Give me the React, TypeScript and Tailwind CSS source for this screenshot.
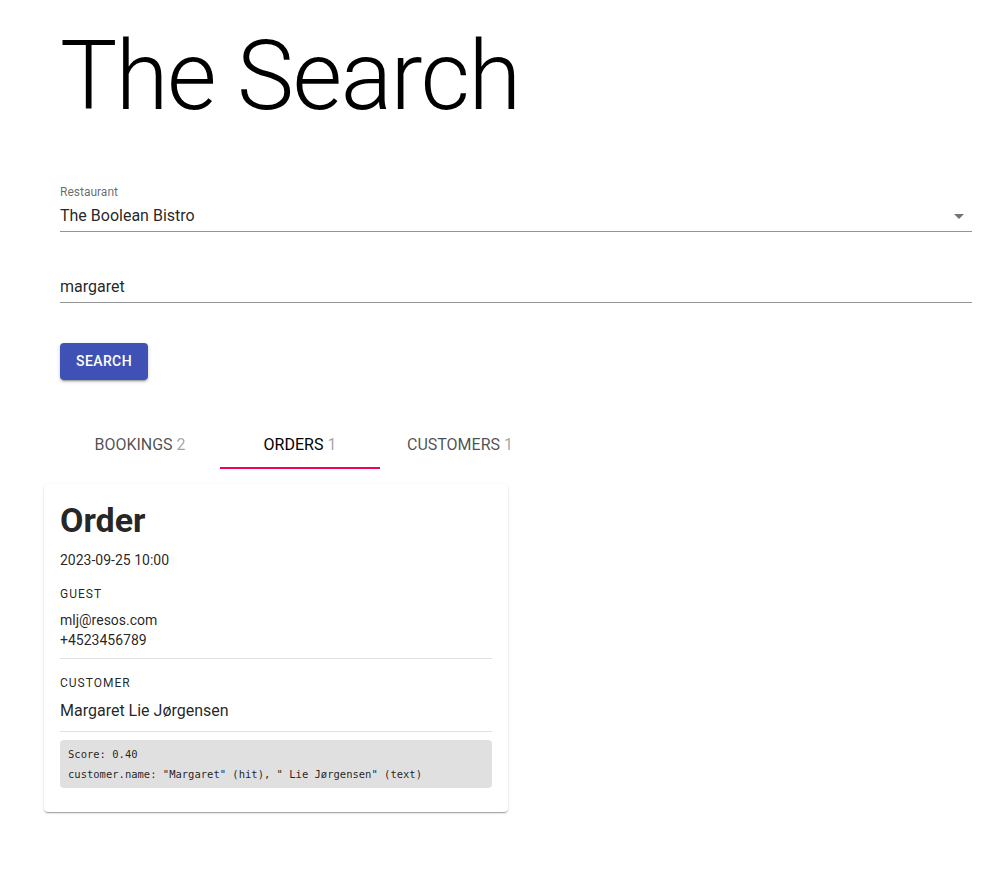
import React from 'react'

export default function App() {
  const tabs = [
    { label: 'BOOKINGS', count: 2, active: false },
    { label: 'ORDERS', count: 1, active: true },
    { label: 'CUSTOMERS', count: 1, active: false },
  ]

  return (
    <div className="min-h-screen bg-white text-[#000000de]" style={{ fontFamily: 'Roboto, "Noto Sans", sans-serif' }}>
      <div className="px-[60px] pr-[32px]">
        {/* Title */}
        <h1 className="text-[96px] font-light leading-[112px] tracking-[-1.5px] text-black pt-[20px]">
          The Search
        </h1>

        {/* Restaurant select */}
        <div className="mt-[53px]">
          <div className="text-[12px] leading-[14px] text-[#00000099]">Restaurant</div>
          <div className="flex items-center justify-between border-b border-[#0000006b] h-[33px] pt-[2px]">
            <span className="text-[16px] text-[#000000de]">The Boolean Bistro</span>
            <svg width="24" height="24" viewBox="0 0 24 24" className="mr-[1px] text-[#0000008a]">
              <path d="M7 10l5 5 5-5z" fill="currentColor" />
            </svg>
          </div>
        </div>

        {/* Query input */}
        <div className="mt-[40px] flex items-center border-b border-[#0000006b] h-[31px]">
          <span className="text-[16px] text-[#000000de]">margaret</span>
        </div>

        {/* Search button */}
        <button className="mt-[40px] h-[37px] w-[88px] rounded-[4px] bg-[#3f51b5] text-white text-[14px] font-medium tracking-[0.4px] shadow-[0_3px_1px_-2px_rgba(0,0,0,0.2),0_2px_2px_0_rgba(0,0,0,0.14),0_1px_5px_0_rgba(0,0,0,0.12)]">
          SEARCH
        </button>

        {/* Tabs */}
        <div className="mt-[41px] flex">
          {tabs.map((t) => (
            <div
              key={t.label}
              className={`w-[160px] h-[48px] flex items-center justify-center text-[16px] relative ${t.active ? 'text-black' : 'text-[#000000b3]'}`}
            >
              <span>
                {t.label} <span className="text-[#00000061]">{t.count}</span>
              </span>
              {t.active && <span className="absolute left-0 right-0 bottom-0 h-[2px] bg-[#f50057]" />}
            </div>
          ))}
        </div>
      </div>

      {/* Result card */}
      <div className="ml-[44px] mt-[15px] w-[464px] rounded-[4px] bg-white px-[16px] pt-[16px] pb-[24px] shadow-[0_2px_1px_-1px_rgba(0,0,0,0.2),0_1px_1px_0_rgba(0,0,0,0.14),0_1px_3px_0_rgba(0,0,0,0.12)]">
        <h2 className="text-[34px] font-bold leading-[40px] text-[#000000de]">Order</h2>
        <div className="mt-[10px] text-[14px] leading-[20px]">2023-09-25 10:00</div>
        <div className="mt-[14px] text-[12px] tracking-[1px] leading-[20px]">GUEST</div>
        <div className="mt-[6px] text-[14px] leading-[20px]">mlj@resos.com</div>
        <div className="text-[14px] leading-[20px]">+4523456789</div>
        <div className="mt-[8px] border-t border-[#0000001f]" />
        <div className="mt-[14px] text-[12px] tracking-[1px] leading-[20px]">CUSTOMER</div>
        <div className="mt-[6px] text-[16px] leading-[24px]">Margaret Lie Jørgensen</div>
        <div className="mt-[8px] border-t border-[#0000001f]" />
        <div className="mt-[8px] rounded-[4px] bg-[#e0e0e0] px-[8px] py-[4px] text-[10.5px] leading-[20px]" style={{ fontFamily: '"DejaVu Sans Mono", monospace' }}>
          <div>Score: 0.40</div>
          <div>customer.name: "Margaret" (hit), " Lie Jørgensen" (text)</div>
        </div>
      </div>
    </div>
  )
}
